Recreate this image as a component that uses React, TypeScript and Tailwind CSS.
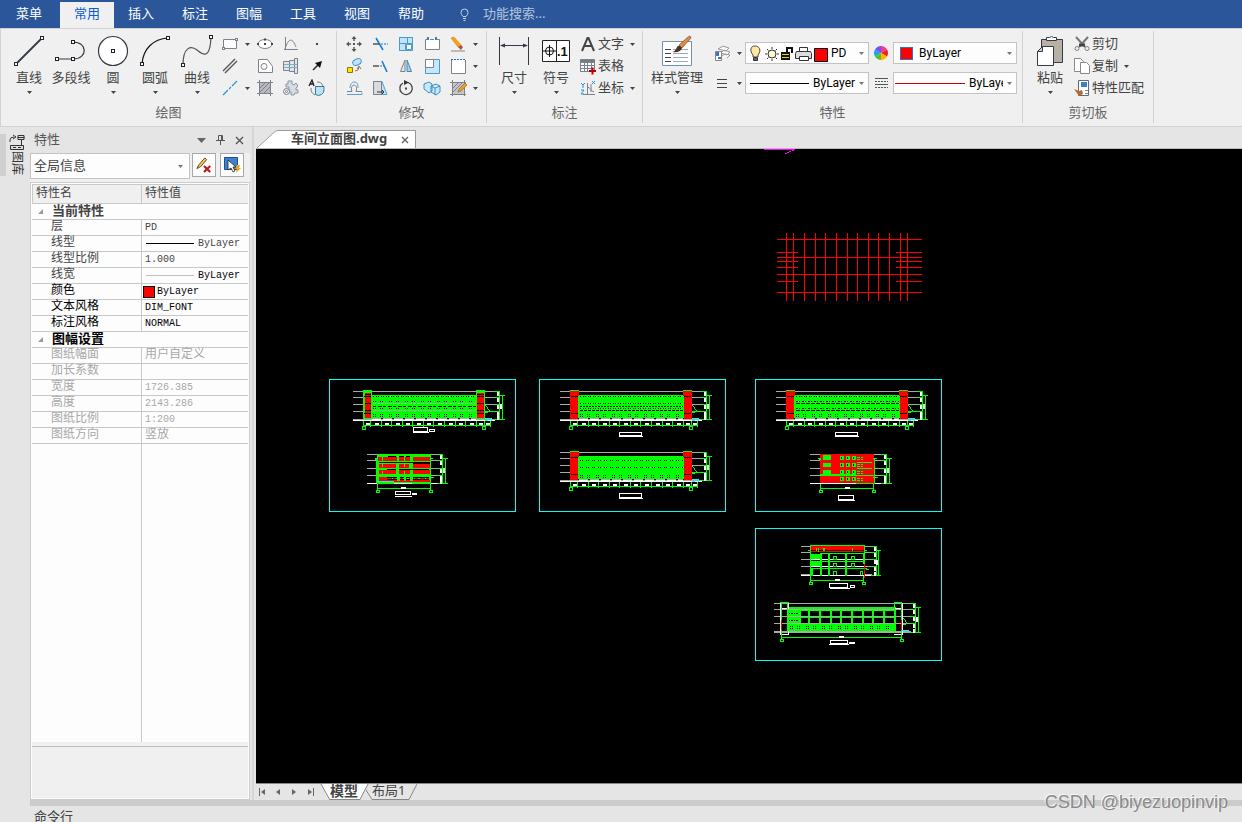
import React from 'react';

type Box = [number, number, number, number];

const GREEN = '#00ff00';
const RED = '#ff0000';
const WHITE = '#ffffff';
const GREY = '#a9a9a9';
const CYAN = '#00ffff';

/* ---------- shared bits ---------- */

function Caret({ className = 'text-[#444]' }: { className?: string }) {
  return (
    <svg width="5" height="3" viewBox="0 0 5 3" className={`shrink-0 ${className}`} aria-hidden="true">
      <path d="M0 0h5L2.5 3z" fill="currentColor" />
    </svg>
  );
}

function Icon({ children, size = 18 }: { children: React.ReactNode; size?: number }) {
  return (
    <svg
      width={size}
      height={size}
      viewBox="0 0 18 18"
      fill="none"
      stroke="#7d828a"
      strokeWidth="1"
      className="shrink-0"
      aria-hidden="true"
    >
      {children}
    </svg>
  );
}

function BigIcon({ children }: { children: React.ReactNode }) {
  return (
    <svg width="34" height="34" viewBox="0 0 34 34" fill="none" stroke="#333a44" className="shrink-0" aria-hidden="true">
      {children}
    </svg>
  );
}

const node = (x: number, y: number) => (
  <rect x={x - 1.5} y={y - 1.5} width="3" height="3" fill="#fff" stroke="#1d222b" />
);

/* ---------- ribbon icons ---------- */

const drawBig = [
  {
    label: '直线',
    menu: true,
    icon: (
      <BigIcon>
        <path d="M4 29 30 3" strokeWidth="1.8" />
        {node(4, 29)}
        {node(30, 3)}
      </BigIcon>
    ),
  },
  {
    label: '多段线',
    menu: false,
    icon: (
      <BigIcon>
        <path d="M3 24h16c15 0 15-17 0-17" strokeWidth="1.2" />
        {node(3, 24)}
        {node(19, 24)}
        {node(19, 7)}
      </BigIcon>
    ),
  },
  {
    label: '圆',
    menu: true,
    icon: (
      <BigIcon>
        <circle cx="17" cy="16" r="14.5" fill="#fff" strokeWidth="1.2" />
        {node(17, 16)}
      </BigIcon>
    ),
  },
  {
    label: '圆弧',
    menu: true,
    icon: (
      <BigIcon>
        <path d="M4 29C5 14 15 4 30 3" stroke="#111" strokeWidth="1.2" />
        {node(4, 29)}
        {node(30, 3)}
      </BigIcon>
    ),
  },
  {
    label: '曲线',
    menu: true,
    icon: (
      <BigIcon>
        <path d="M3 30C3 12 11 10 17 15s13 10 14-13" stroke="#555" strokeWidth="1.2" />
        {node(3, 30)}
        {node(31, 2)}
      </BigIcon>
    ),
  },
];

const drawSmall = [
  {
    name: '矩形',
    menu: true,
    icon: (
      <Icon>
        <path d="M2.500 4.500h13v9h-13z" fill="#fff" />
        <rect x="1.500" y="12.500" width="2" height="2" fill="#fff" />
        <rect x="14.500" y="3.500" width="2" height="2" fill="#fff" />
      </Icon>
    ),
  },
  {
    name: '椭圆',
    icon: (
      <Icon>
        <ellipse cx="9" cy="9" rx="7" ry="4.500" fill="#fff" />
        <path d="M8 9h2M8 4.500h2M1 9h2M15 9h2" stroke="#444" strokeWidth="2" />
      </Icon>
    ),
  },
  {
    name: '公式曲线',
    icon: (
      <Icon>
        <path d="M3.500 2v13M2 14.500h14M3 14C7 1 11 4 14 12" />
      </Icon>
    ),
  },
  {
    name: '点',
    icon: (
      <Icon>
        <rect x="8" y="8" width="2" height="2" fill="#444" stroke="none" />
      </Icon>
    ),
  },
  {
    name: '平行线',
    icon: (
      <Icon>
        <path d="M2 14 14 2M4 16 16 4" stroke="#555" strokeWidth="1.400" />
      </Icon>
    ),
  },
  {
    name: '多边形',
    icon: (
      <Icon>
        <path d="M2.500 2.500h9l5 7v6h-14z" fill="#fff" />
        <circle cx="8" cy="9.500" r="3" />
      </Icon>
    ),
  },
  {
    name: '轴',
    icon: (
      <Icon>
        <path d="M1.500 4.500h6v9h-6zM7.500 3.500h5v11h-5zM12.500 1.500h3v15h-3z" fill="#dce6f0" />
        <path d="M2 7.500h13M2 10.500h13" stroke="#8ab" />
      </Icon>
    ),
  },
  {
    name: '箭头',
    icon: (
      <Icon>
        <path d="m5 13 5-5" stroke="#222" strokeWidth="1.400" />
        <path d="m14 4-2 7-5-5z" fill="#111" stroke="none" />
      </Icon>
    ),
  },
  {
    name: '中心线',
    menu: true,
    icon: (
      <Icon>
        <path d="m2 16 5-5m1-1 2-2m1-1 5-5" stroke="#2a94d6" strokeWidth="1.200" />
      </Icon>
    ),
  },
  {
    name: '剖面线',
    icon: (
      <Icon>
        <path d="M3.500 3.500h11v11h-11z" fill="#b6bac0" />
        <path d="M1 3.500h16M1 14.500h16M3.500 1v16M14.500 1v16M4 9l5-5M4 13l9-9M8 14l6-6" />
      </Icon>
    ),
  },
  {
    name: '齿形',
    icon: (
      <Icon>
        <path
          d="M6 2h4v3l2 1 2-2 2 3-2 2v2h2v3h-3l-1 2H9v-3l-2 0v-5H4V5h2z"
          fill="#d4dce6"
          stroke="#8a95a2"
        />
        <circle cx="4.500" cy="12.500" r="3" fill="#f0f0f0" />
        <circle cx="4.500" cy="12.500" r="1" />
      </Icon>
    ),
  },
  {
    name: '局部放大',
    icon: (
      <Icon>
        <path d="M7.500 7.500H16v3a5.500 5.500 0 0 1-8.500 5z" fill="#b9e4fa" stroke="#478" />
        <path d="M9 3a6 6 0 0 1 6 4M3 9a7 7 0 0 0 4 7" />
        <path d="m1 7 3-6 2 6M2 5h4" stroke="#222" strokeWidth="1.300" />
      </Icon>
    ),
  },
];

const modifySmall = [
  {
    name: '平移',
    icon: (
      <Icon>
        <path d="M9 3v3M9 12v3M3 9h3M12 9h3" stroke="#555" strokeWidth="1.400" />
        <path d="m9 1 2.500 3h-5zM9 17l2.500-3h-5zM1 9l3 2.500v-5zM17 9l-3 2.500v-5z" fill="#555" stroke="none" />
        <path d="M8 9h2" stroke="#555" strokeWidth="2" />
      </Icon>
    ),
  },
  {
    name: '裁剪',
    icon: (
      <Icon>
        <path d="M2 9h7" stroke="#555" strokeWidth="1.500" />
        <path d="m5 3 7 12" stroke="#1677d0" strokeWidth="1.500" />
        <path d="M10 9h7" stroke="#1677d0" strokeDasharray="2 1" />
      </Icon>
    ),
  },
  {
    name: '阵列',
    icon: (
      <Icon>
        <path d="M2.500 2.500h13v13h-13z" fill="#fff" stroke="#4b9ac9" />
        <path d="M2.500 2.500h8v6h-8zM10.500 2.500h5v6h-5zM2.500 8.500h6v7h-6z" fill="#bfe5fa" stroke="#4b9ac9" />
        <path d="M9.500 9.500h5v5h-5z" fill="#fff" stroke="#4b9ac9" />
      </Icon>
    ),
  },
  {
    name: '打断',
    icon: (
      <Icon>
        <path d="M5 4.500H2.500v10h14v-10H13M7 4.500h4" fill="#fff" />
        <path d="M5 2v3M13 2v3" stroke="#2a84c8" strokeWidth="2" />
      </Icon>
    ),
  },
  {
    name: '删除',
    menu: true,
    icon: (
      <Icon>
        <path d="M2 16h14" stroke="#888" />
        <path d="m2 3 3-1 7 8-3 2z" fill="#f5a11d" stroke="#d08a18" strokeWidth=".7" />
        <path d="m9 12 3-2 2 2-2 3z" fill="#a84f45" stroke="none" />
      </Icon>
    ),
  },
  {
    name: '平移复制',
    icon: (
      <Icon>
        <ellipse cx="12" cy="5" rx="4.500" ry="3" transform="rotate(-25 12 5)" fill="#bfe5fa" stroke="#4b9ac9" />
        <path d="M2.500 10.500h5v5h-5z" fill="#ffe600" stroke="#887a00" />
        <path d="M10 14q4 0 4-4m-2 2 2-3 2 3" stroke="#a66" />
      </Icon>
    ),
  },
  {
    name: '延伸',
    icon: (
      <Icon>
        <path d="M2 9h6" stroke="#555" strokeWidth="1.500" />
        <path d="M9 9h4" stroke="#1677d0" strokeDasharray="2 1" />
        <path d="m11 4 5 11" stroke="#1677d0" strokeWidth="1.500" />
      </Icon>
    ),
  },
  {
    name: '镜像',
    icon: (
      <Icon>
        <path d="M8 3v11.500H3.500z" fill="#e4e6e8" />
        <path d="M10 3v11.500h4.500z" fill="#9ed5f2" stroke="#4b87a9" />
      </Icon>
    ),
  },
  {
    name: '缩放',
    icon: (
      <Icon>
        <path d="M2.500 2.500h14v14h-14z" fill="#c5e9fb" stroke="#4b9ac9" />
        <path d="M2.500 2.500h8v8h-8z" fill="#fff" />
      </Icon>
    ),
  },
  {
    name: '块',
    menu: true,
    icon: (
      <Icon>
        <path d="M2.500 3v13.500h14V3" fill="#fff" />
        <path d="M2 2.500h15" stroke="#1677d0" strokeDasharray="2 1" />
      </Icon>
    ),
  },
  {
    name: '等距线',
    icon: (
      <Icon>
        <path d="M2 12.500h5C4 4 14 4 11 12.500h6" stroke="#7a8088" />
        <path d="M2 15.500h15v-2M5 9C5 1 14 1 13 9" stroke="#5aa0cc" />
      </Icon>
    ),
  },
  {
    name: '拉伸',
    icon: (
      <Icon>
        <path d="M3 2.500h8l5 13H3z" fill="#bfe5fa" stroke="#5aa0cc" />
        <path d="M2.500 2.500h8v13h-8z" fill="#d9dbde" />
        <path d="M6 13h7m-2-2 2 2-2 2" stroke="#333" />
      </Icon>
    ),
  },
  {
    name: '旋转',
    icon: (
      <Icon>
        <path d="M6 4a6.200 6.200 0 1 0 5-.5" stroke="#444" strokeWidth="1.300" />
        <path d="M7 1v5l5-2.500z" fill="#333" stroke="none" />
        <path d="M8 9.500h2" stroke="#444" strokeWidth="2" />
      </Icon>
    ),
  },
  {
    name: '三维块',
    icon: (
      <Icon>
        <path d="M1 5l5-2 3 2v7l-3 2-5-4zM8 7l5-2 4 2v6l-4 3-5-3zM8 7l4 2 5-2M12 9v7" fill="#c5e9fb" stroke="#3d8fc0" />
      </Icon>
    ),
  },
  {
    name: '填充编辑',
    menu: true,
    icon: (
      <Icon>
        <path d="M3.500 3.500h12v12h-12z" fill="#c3c6ca" />
        <path d="M1 3.500h16M1 15.500h16M3.500 1v16M15.500 1v16M4 9l5-5M4 13l9-9" />
        <path d="m9 13 1-3 6-6 2 2-6 6z" fill="#f0a020" stroke="#8a5a10" strokeWidth=".6" />
      </Icon>
    ),
  },
];

/* ---------- ribbon ---------- */

function BigButton({
  label,
  icon,
  menu = true,
  className = 'w-[42px]',
}: {
  label: string;
  icon: React.ReactNode;
  menu?: boolean;
  className?: string;
}) {
  return (
    <button className={`flex shrink-0 flex-col items-center whitespace-nowrap pt-1 ${className}`}>
      {icon}
      <span className="leading-4">{label}</span>
      {menu && <Caret className="mt-1.5 text-[#444]" />}
    </button>
  );
}

function RowButton({ label, icon, menu = false }: { label: string; icon: React.ReactNode; menu?: boolean }) {
  return (
    <button className="flex h-[22px] items-center whitespace-nowrap">
      {icon}
      <span className="ml-px">{label}</span>
      {menu && <Caret className="ml-1.5 text-[#444]" />}
    </button>
  );
}

function ToolButton({ tool }: { tool: { name: string; icon: React.ReactNode; menu?: boolean } }) {
  return (
    <button aria-label={tool.name} className="flex h-[22px] items-center">
      {tool.icon}
      {tool.menu && <Caret className="ml-1.5 text-[#444]" />}
    </button>
  );
}

function Group({ title, className, children }: { title: string; className: string; children: React.ReactNode }) {
  return (
    <section className={`flex shrink-0 flex-col border-r border-[#d2d2d2] ${className}`}>
      <div className="flex h-[72px] items-start">{children}</div>
      <h2 className="text-center leading-[18px] text-[#666]">{title}</h2>
    </section>
  );
}

function Combo({
  label,
  options,
  lead,
  className,
  selectClass,
}: {
  label: string;
  options: string[];
  lead?: React.ReactNode;
  className: string;
  selectClass: string;
}) {
  return (
    <div className={`flex items-center border border-[#c3c3c3] bg-[#fdfdfd] ${className}`}>
      {lead}
      <select
        aria-label={label}
        className={`min-w-0 cursor-default appearance-none bg-transparent outline-none ${selectClass}`}
      >
        {options.map((o) => (
          <option key={o}>{o}</option>
        ))}
      </select>
      <Caret className="pointer-events-none ml-auto mr-1 text-[#777]" />
    </div>
  );
}

function LayerIcons() {
  return (
    <svg width="79" height="19" viewBox="0 0 79 19" fill="none" className="ml-1 shrink-0" aria-hidden="true">
      {/* bulb */}
      <path d="M3 11C-1 6 1 2 5 2s7 4 3 9v2H3z" fill="#ffe9a0" stroke="#444" />
      <path d="M3.500 13.500h4v3h-4z" fill="#666" stroke="#333" />
      {/* sun */}
      <circle cx="22" cy="10" r="4" fill="#fff8d0" stroke="#333" />
      <path d="M22 3v2M22 15v2M15 10h2M27 10h2M17 5l1.500 1.500M27 5l-1.500 1.500M17 15l1.500-1.500M27 15l-1.500-1.500" stroke="#333" />
      {/* lock */}
      <path d="M31 8h9v8h-9z" fill="#111" />
      <path d="M32 10.500h7M32 13.500h7" stroke="#e6d800" />
      <path d="M37 8V4h5v5" stroke="#111" strokeWidth="2" />
      {/* printer */}
      <path d="M49.500 8V3.500h8V8" fill="#fff" stroke="#333" />
      <path d="M46.500 7.500h14l1 2v5h-16v-5z" fill="#ddd" stroke="#333" />
      <path d="M49.500 12.500h9v4h-9z" fill="#fff" stroke="#333" />
      <path d="M64.500 4.500h13v13h-13z" fill="#f00" stroke="#000" />
    </svg>
  );
}

function Ribbon() {
  return (
    <div className="flex h-[99px] shrink-0 overflow-hidden border-y border-l border-[#d2d2d2] bg-[#f0f0f0] pb-[3px] pt-0.5 text-[#444]">
      <Group title="绘图" className="w-[336px]">
        <div className="flex pl-[7px]">
          {drawBig.map((b) => (
            <BigButton key={b.label} {...b} />
          ))}
        </div>
        <div className="ml-[3px] grid grid-cols-[35px_26px_26px_26px] pt-0.5">
          {drawSmall.map((t) => (
            <ToolButton key={t.name} tool={t} />
          ))}
        </div>
      </Group>

      <Group title="修改" className="w-[150px]">
        <div className="grid grid-cols-[26px_26px_26px_26px_34px] pl-2 pt-0.5">
          {modifySmall.map((t) => (
            <ToolButton key={t.name} tool={t} />
          ))}
        </div>
      </Group>

      <Group title="标注" className="w-[156px]">
        <div className="flex pl-1.5">
          <BigButton
            label="尺寸"
            icon={
              <BigIcon>
                <path d="M2.500 2v28M31.500 2v28M4 10.500h26" strokeWidth="1" />
                <path d="m3 10.500 5-2v4zM31 10.500l-5-2v4z" fill="#333a44" stroke="none" />
              </BigIcon>
            }
          />
          <BigButton
            label="符号"
            icon={
              <svg width="34" height="34" viewBox="0 0 34 34" className="shrink-0" aria-hidden="true">
                <path d="M3.500 5.500h27v21h-27zM17.500 5v22" fill="#fff" stroke="#222" />
                <circle cx="10.500" cy="16" r="4" fill="none" stroke="#111" />
                <path d="M4 16h13M10.500 10v12" stroke="#111" />
                <text x="18" y="21" fontSize="13" fontWeight="bold" fontFamily="Liberation Sans, sans-serif" fill="#111">
                  .1
                </text>
              </svg>
            }
          />
        </div>
        <div className="flex flex-col pl-0.5 pt-0.5">
          <RowButton
            label="文字"
            menu
            icon={
              <Icon>
                <path d="M3 16 8.500 3h1L15 16M5.500 11h7" stroke="#444" strokeWidth="2" />
              </Icon>
            }
          />
          <RowButton
            label="表格"
            icon={
              <Icon>
                <path d="M1.500 2.500h14v12h-14z" fill="#fff" />
                <path d="M1.500 2.500h14v3h-14z" fill="#777c84" />
                <path d="M1.500 8.500h14M1.500 11.500h14M5.500 5v9M8.500 5v9M12.500 5v9" />
                <path d="M10 14h7M13.500 10.500v7" stroke="#b00" strokeWidth="2" />
              </Icon>
            }
          />
          <RowButton
            label="坐标"
            menu
            icon={
              <Icon>
                <path d="M8.500 4v12M4 15.500h12M8 8c4 0 3 4 7 5M12 5v8" />
                <path d="m2 4 2 2v3M6 4 4 6M13 2l3 3m0-3-3 3M2 11h3l-3 4h3" stroke="#2a94d6" />
              </Icon>
            }
          />
        </div>
      </Group>

      <Group title="特性" className="w-[380px]">
        <BigButton
          label="样式管理"
          className="w-[68px]"
          icon={
            <svg width="34" height="34" viewBox="0 0 34 34" fill="none" className="shrink-0" aria-hidden="true">
              <path d="M2.500 6.500h29v24h-29z" fill="#fff" stroke="#7390ad" />
              <path d="M5 14.500h6M5 18.500h6M5 22.500h6M5 26.500h6" stroke="#445" />
              <path d="M13 14.500h15M13 18.500h15M13 22.500h15M13 26.500h15" stroke="#9aaabd" />
              <path d="m19 10 9-8q3-2 3 1l-9 10z" fill="#d98b4a" stroke="#8a4d1d" strokeWidth=".7" />
              <path d="M12 17q3 0 5-5 2-3 5 1-1 5-10 4z" fill="#4a3426" />
            </svg>
          }
        />
        <div className="grid grid-cols-[34px_124px_24px_124px] gap-y-2 pt-[11px] font-['Roboto',sans-serif] text-xs text-black">
          <button aria-label="图层" className="flex h-[22px] items-center gap-1.5 pl-0.5">
            <Icon>
              <path d="m5 5 5-3 6 2-3 3zM8 9l3-3 6 2-3 3zM9 12l3-2 5 1-3 3" fill="#f8f8f8" stroke="#999" />
              <path d="M2.500 7.500h6v9h-6z" fill="#fff" stroke="#888" />
              <path d="M3 8h3v4H3zM5 13h3v2H5z" fill="#3f74b5" stroke="none" />
            </Icon>
            <Caret />
          </button>
          <Combo label="图层列表" options={['PD']} lead={<LayerIcons />} className="h-[22px]" selectClass="ml-0.5 w-6" />
          <button aria-label="颜色" className="flex h-[22px] items-center justify-center">
            <svg width="14" height="14" viewBox="-7 -7 14 14" aria-hidden="true">
              <path d="M0 0V-7A7 7 0 0 1 6-3.500z" fill="#e83e9a" />
              <path d="M0 0 6-3.500A7 7 0 0 1 6 3.500z" fill="#f5201c" />
              <path d="M0 0 6 3.500A7 7 0 0 1 0 7z" fill="#ffb300" />
              <path d="M0 0V7A7 7 0 0 1-6 3.500z" fill="#52c41a" />
              <path d="M0 0-6 3.500A7 7 0 0 1-6-3.500z" fill="#24a0f0" />
              <path d="M0 0-6-3.500A7 7 0 0 1 0-7z" fill="#7a4df0" />
            </svg>
          </button>
          <Combo
            label="颜色列表"
            options={['ByLayer']}
            lead={<span className="ml-1.5 size-[13px] border border-[#1e78d0] bg-[#ff0000]" />}
            className="h-[22px]"
            selectClass="ml-1.5 w-16"
          />
          <button aria-label="线型" className="flex h-[22px] items-center gap-1.5 pl-0.5">
            <Icon>
              <path d="M4 5.500h10M4 9.500h10M4 13.500h10" stroke="#444" />
            </Icon>
            <Caret />
          </button>
          <Combo
            label="线型列表"
            options={['ByLayer']}
            lead={<span className="ml-1 h-px w-[59px] shrink-0 bg-black" />}
            className="h-[22px]"
            selectClass="ml-1 w-12"
          />
          <button aria-label="线宽" className="flex h-[22px] items-center justify-center">
            <svg width="13" height="12" viewBox="0 0 13 12" stroke="#555" aria-hidden="true">
              <path d="M0 1.500h13M0 7.500h13" />
              <path d="M0 4.500h13M0 10.500h13" strokeDasharray="2 1" />
            </svg>
          </button>
          <Combo
            label="线宽列表"
            options={['ByLayer']}
            lead={<span className="ml-px h-px w-[70px] shrink-0 bg-[#d00000]" />}
            className="h-[22px]"
            selectClass="ml-1 w-[34px]"
          />
        </div>
      </Group>

      <Group title="剪切板" className="w-[131px]">
        <div className="flex pl-1.5">
          <BigButton
            label="粘贴"
            icon={
              <BigIcon>
                <path d="M8.500 4.500h21v23h-21z" fill="#b9b0a4" />
                <path d="M13.500 5.500v-3h3q2-2 4 0h3v3z" fill="#fff" />
                <path d="M4.500 16.500l5-5h11v19h-16z" fill="#fff" />
                <path d="M4.500 16.500h5v-5z" fill="#c9ccd2" />
              </BigIcon>
            }
          />
        </div>
        <div className="flex flex-col pl-0.5 pt-0.5">
          <RowButton
            label="剪切"
            icon={
              <Icon>
                <path d="m3 2 9 10M15 2 6 12" stroke="#777" strokeWidth="2" />
                <path d="M6 10h6" stroke="#444" strokeWidth="3" />
                <circle cx="4" cy="13.500" r="2" />
                <circle cx="14" cy="13.500" r="2" />
              </Icon>
            }
          />
          <RowButton
            label="复制"
            menu
            icon={
              <Icon>
                <path d="M1.500 1.500h6l3 3v10h-9z" fill="#fff" stroke="#888" />
                <path d="M7.500 5.500h6l3 3v8h-9z" fill="#fff" stroke="#888" />
              </Icon>
            }
          />
          <RowButton
            label="特性匹配"
            icon={
              <Icon>
                <path d="M5.500 1.500h10v15h-10z" fill="#fff" stroke="#5a6b80" />
                <path d="M8 3h6v5H8z" fill="#3a7fc4" stroke="none" />
                <path d="M12 11.500h3M12 14.500h3" />
                <path d="M1 10l5 2 3-1 1 4-4 2z" fill="#b56a28" stroke="none" />
              </Icon>
            }
          />
        </div>
      </Group>
    </div>
  );
}

const menus = ['常用', '插入', '标注', '图幅', '工具', '视图', '帮助'];

function MenuBar() {
  return (
    <nav className="flex h-7 shrink-0 items-end bg-[#2b579a] text-white">
      <button className="h-[26px] w-[60px] pb-0.5 pr-0.5">菜单</button>
      {menus.map((m) => (
        <button
          key={m}
          className={
            m === '常用'
              ? 'h-[26px] w-[54px] bg-[#f0f0f0] pb-0.5 text-[#0a5ad0]'
              : 'h-[26px] w-[54px] pb-0.5'
          }
        >
          {m}
        </button>
      ))}
      <label className="ml-[22px] flex h-[26px] items-center gap-3.5 pb-0.5">
        <svg width="9" height="13" viewBox="0 0 9 13" fill="none" stroke="#c6d3e8" aria-hidden="true">
          <path d="M3 8.500Q1 6.500 1 4.500a3.500 3.500 0 0 1 7 0q0 2-2 4zM3 10.500h3M3.500 12.500h2" />
        </svg>
        <input
          aria-label="功能搜索"
          placeholder="功能搜索..."
          className="w-32 bg-transparent outline-none placeholder:text-[#b4c4de]"
        />
      </label>
    </nav>
  );
}

/* ---------- property panel ---------- */

interface PropRow {
  name: string;
  value?: React.ReactNode;
  group?: boolean;
  tone: string;
}

const soft = 'text-[#444]';
const dark = 'text-black';
const off = 'text-[#a8a8a8]';

const rows: PropRow[] = [
  { name: '当前特性', group: true, tone: soft },
  { name: '层', value: 'PD', tone: soft },
  {
    name: '线型',
    value: (
      <span className="flex items-center gap-1">
        <span className="ml-px h-px w-12 bg-black" />
        ByLayer
      </span>
    ),
    tone: soft,
  },
  { name: '线型比例', value: '1.000', tone: soft },
  {
    name: '线宽',
    value: (
      <span className="flex items-center gap-1 text-black">
        <span className="ml-px h-px w-12 bg-[#c0c0c0]" />
        ByLayer
      </span>
    ),
    tone: soft,
  },
  {
    name: '颜色',
    value: (
      <span className="-ml-0.5 flex items-center gap-0.5">
        <span className="size-3 border border-black bg-[#ff0000]" />
        ByLayer
      </span>
    ),
    tone: dark,
  },
  { name: '文本风格', value: 'DIM_FONT', tone: dark },
  { name: '标注风格', value: 'NORMAL', tone: dark },
  { name: '图幅设置', group: true, tone: dark },
  { name: '图纸幅面', value: <span className="text-xs leading-[15px]">用户自定义</span>, tone: off },
  { name: '加长系数', tone: off },
  { name: '宽度', value: '1726.385', tone: off },
  { name: '高度', value: '2143.286', tone: off },
  { name: '图纸比例', value: '1:200', tone: off },
  { name: '图纸方向', value: <span className="text-xs leading-[15px]">竖放</span>, tone: off },
];

function PropertyPanel() {
  return (
    <aside className="flex w-[220px] shrink-0 flex-col">
      <header className="flex h-[26px] items-center pl-1 pr-1.5 text-[#555]">
        <h2>特性</h2>
        <button aria-label="菜单" className="ml-auto">
          <svg width="9" height="5" viewBox="0 0 9 5" aria-hidden="true">
            <path d="M0 0h9L4.500 5z" fill="#666" />
          </svg>
        </button>
        <button aria-label="固定" className="ml-2.5">
          <svg width="9" height="10" viewBox="0 0 9 10" fill="none" stroke="#555" aria-hidden="true">
            <path d="M2.500 5.500v-5h4v5M5.500 0v5M0 5.500h9M4.500 6v4" />
          </svg>
        </button>
        <button aria-label="关闭" className="ml-2.5">
          <svg width="9" height="9" viewBox="0 0 9 9" stroke="#555" strokeWidth="1.400" aria-hidden="true">
            <path d="m1 1 7 7M8 1 1 8" />
          </svg>
        </button>
      </header>

      <div className="flex h-[29px] items-start bg-[#f0f0f0]">
        <Combo
          label="选择集"
          options={['全局信息']}
          className="h-[26px] w-40 pr-0.5 text-[#444]"
          selectClass="ml-[3px] w-32"
        />
        <button aria-label="清除" className="ml-0.5 flex size-6 items-center justify-center border border-[#a9a9a9] bg-[#fdfdfd]">
          <Icon size={16}>
            <path d="m1 13 2-4 7-8 2 2-7 8z" fill="#f8c552" stroke="#5a3a10" />
            <path d="m9 10 7 7M16 10l-7 7" stroke="#c01818" strokeWidth="2.400" />
          </Icon>
        </button>
        <button aria-label="选择" className="ml-1 flex size-6 items-center justify-center border border-[#a9a9a9] bg-[#fdfdfd]">
          <Icon size={18}>
            <path d="M1.500 1.500h13v12h-13z" fill="#3b82cf" stroke="#1b4f90" />
            <path d="M5 4v10l3-2 2 4 2-1-2-4h3z" fill="#fff" stroke="#222" strokeWidth=".8" />
            <path d="m14 9-2 4h2l-1 4 5-5h-2l1-3z" fill="#f5a11d" stroke="none" />
          </Icon>
        </button>
      </div>

      <div className="flex min-h-0 flex-1 flex-col border border-[#ccc] bg-[#fdfdfd] p-px font-['Liberation_Mono','Noto_Sans_CJK_SC',monospace]">
        <table className="w-full table-fixed border-separate border-spacing-0 text-left">
          <thead>
            <tr className="bg-[#f0f0f0] text-xs leading-[18px] text-[#444]">
              <th className="h-5 w-[110px] border border-[#c8c8c8] p-0 pl-[3px] font-normal">特性名</th>
              <th className="h-5 border-y border-[#c8c8c8] p-0 pl-[3px] font-normal">特性值</th>
            </tr>
          </thead>
          <tbody>
            {rows.map((r) =>
              r.group ? (
                <tr key={r.name} className={r.tone}>
                  <th colSpan={2} className="h-4 border-b border-[#c8c8c8] p-0 pl-1.5 text-[13px] leading-[15px]">
                    <span className="flex items-center gap-[9px]">
                      <svg width="5" height="5" viewBox="0 0 5 5" aria-hidden="true">
                        <path d="M5 0v5H0z" fill="#999" />
                      </svg>
                      {r.name}
                    </span>
                  </th>
                </tr>
              ) : (
                <tr key={r.name} className={r.tone}>
                  <th className="h-4 border-b border-r border-[#c8c8c8] p-0 pl-[19px] text-xs font-normal leading-[15px]">
                    {r.name}
                  </th>
                  <td className="h-4 whitespace-nowrap border-b border-[#c8c8c8] p-0 pl-[3px] text-[10px] leading-[15px]">
                    {r.value}
                  </td>
                </tr>
              )
            )}
          </tbody>
        </table>
        <div className="w-[110px] flex-1 border-r border-[#c8c8c8]" />
        <div className="h-14 border-t-4 border-[#f0f0f0]">
          <div className="h-full border-t border-[#c0c0c0] bg-[#f0f0f0]" />
        </div>
      </div>
    </aside>
  );
}

/* ---------- drawing ---------- */

function Fill({ c, r }: { c: string; r: Box[] }) {
  return <path fill={c} d={r.map(([x, y, w, h]) => `M${x} ${y}h${w}v${h}h${-w}z`).join('')} />;
}

function Dots({ x, y, w, dash, c = '#000' }: { x: number; y: number; w: number; dash: string; c?: string }) {
  return <path d={`M${x} ${y + 0.5}h${w}`} stroke={c} strokeWidth="1" strokeDasharray={dash} fill="none" />;
}

function Outline({ c, r }: { c: string; r: Box[] }) {
  return (
    <path
      fill="none"
      stroke={c}
      strokeWidth="1"
      d={r.map(([x, y, w, h]) => `M${x + 0.5} ${y + 0.5}h${w - 1}v${h - 1}h${-(w - 1)}z`).join('')}
    />
  );
}

// vertical dimension chain: levels are the storey lines, the outer line starts one level down
function Dims({ x, levels, gap = 3 }: { x: number; levels: number[]; gap?: number }) {
  const top = levels[0];
  const bottom = levels[levels.length - 1];
  return (
    <g>
      <Fill c={GREEN} r={levels.map((y): Box => [x - 3, y, 6, 1])} />
      <Fill
        c={GREEN}
        r={[
          [x + 2, top, 1, bottom - top],
          [x + 2 + gap, levels[1] - 2, 1, bottom - levels[1] + 3],
          [x + gap, levels[1] - 2, 5, 1],
          [x + gap, bottom, 5, 1],
        ]}
      />
      <Fill c={WHITE} r={levels.slice(0, -1).map((y): Box => [x, y + 1, 2, 4])} />
      <Fill
        c={WHITE}
        r={[
          [x, bottom - 3, 2, 4],
          [x + gap, Math.round((top + bottom) / 2) - 1, 2, 5],
        ]}
      />
    </g>
  );
}

const axes = [0, 7, 18, 28, 39, 49, 60, 70, 81, 92, 102, 113, 121, 127];

type Pattern = { y: number; dash: string; c?: string };

const pair = '1 1 1 4 1 1 1 6';
const dense = '1 2 1 1';

function LongElevation({
  x,
  y,
  windows,
  framed = false,
  label,
}: {
  x: number;
  y: number;
  windows: Pattern[];
  framed?: boolean;
  label: Box;
}) {
  return (
    <g transform={`translate(${x} ${y})`}>
      <Fill
        c={GREY}
        r={[
          [-10, 1, 142, 1],
          [-10, 7, 10, 1],
          [-10, 14, 10, 1],
          [-10, 21, 10, 1],
          [-10, 29, 142, 1],
          [122, 7, 10, 1],
          [122, 14, 10, 1],
          [122, 21, 10, 1],
        ]}
      />
      <Fill c={WHITE} r={[[-10, 30, 142, 1]]} />
      <Fill c={GREEN} r={[[8, 5, 106, 23]]} />
      <Dots x={9} y={28} w={104} dash="9 2" c={GREY} />
      <Dots x={9} y={29} w={104} dash="9 2" c={WHITE} />
      {framed ? (
        <>
          <Fill
            c={GREEN}
            r={[
              [0, 0, 9, 29],
              [113, 0, 9, 29],
            ]}
          />
          <Fill
            c={RED}
            r={[
              [2, 3, 6, 25],
              [114, 3, 7, 25],
            ]}
          />
        </>
      ) : (
        <>
          <Fill
            c={RED}
            r={[
              [0, 0, 9, 6],
              [0, 6, 8, 23],
              [113, 0, 9, 6],
              [114, 6, 8, 23],
            ]}
          />
          <Fill
            c={GREEN}
            r={[
              [0, 0, 9, 1],
              [113, 0, 9, 1],
            ]}
          />
        </>
      )}
      <Fill
        c="#000"
        r={[
          [1, 6, 7, 1],
          [1, 23, 7, 1],
          [114, 6, 7, 1],
          [114, 23, 7, 1],
        ]}
      />
      {framed && (
        <Fill
          c="#000"
          r={[
            [2, 4, 6, 1],
            [2, 13, 6, 1],
            [2, 20, 6, 1],
            [114, 4, 7, 1],
            [114, 13, 7, 1],
            [114, 20, 7, 1],
          ]}
        />
      )}
      {windows.map((p, i) => (
        <Dots key={i} x={10} y={p.y} w={103} dash={p.dash} c={p.c} />
      ))}
      {/* axis chain under the building */}
      <Fill c={GREEN} r={axes.map((a): Box => [a, 31, 1, 6])} />
      <Fill c={GREEN} r={[[0, 35, 128, 1]]} />
      <Fill c={WHITE} r={axes.slice(0, -1).map((a, i): Box => [Math.round((a + axes[i + 1]) / 2) - 1, 33, 4, 2])} />
      <Outline
        c={GREEN}
        r={[
          [-1, 36, 4, 4],
          [119, 36, 4, 4],
        ]}
      />
      {/* stair and ramp */}
      <Fill
        c={GREEN}
        r={[
          [122, 15, 1, 1],
          [123, 16, 1, 1],
          [124, 17, 1, 2],
          [125, 19, 1, 1],
          [126, 20, 1, 1],
          [122, 21, 5, 1],
          [127, 21, 6, 1],
          [122, 22, 3, 1],
        ]}
      />
      <Fill
        c={CYAN}
        r={[
          [122, 28, 7, 1],
          [122, 30, 3, 1],
          [128, 28, 1, 3],
        ]}
      />
      <Dims x={134} levels={[1, 7, 14, 21, 29]} />
      <Outline c={WHITE} r={[label]} />
      <Fill c={WHITE} r={[[label[0], label[1] + label[3], label[2] + 1, 1]]} />
    </g>
  );
}

// feet below a short elevation: posts, dimension line, axis bubbles
function Feet({ x1, x2, y, mid }: { x1: number; x2: number; y: number; mid: number }) {
  return (
    <g>
      <Fill
        c={GREEN}
        r={[
          [x1, y, 1, 7],
          [x2, y, 1, 7],
          [x1, y + 4, x2 - x1, 1],
        ]}
      />
      <Outline
        c={GREEN}
        r={[
          [x1 - 1, y + 6, 4, 3],
          [x2 - 1, y + 6, 4, 3],
        ]}
      />
      <Fill c={WHITE} r={[[mid, y + 3, 5, 2]]} />
    </g>
  );
}

function SideLevels({ x1, x2, x3, x4, levels, base }: { x1: number; x2: number; x3: number; x4: number; levels: number[]; base: number }) {
  return (
    <g>
      <Fill c={GREY} r={levels.flatMap((y): Box[] => [[x1, y, x2 - x1, 1], [x3, y, x4 - x3, 1]])} />
      <Fill c={WHITE} r={[[x1, base, x4 - x1, 1]]} />
    </g>
  );
}

function SideFramed() {
  return (
    <g transform="translate(325 375)">
      <SideLevels x1={42} x2={52} x3={106} x4={113} levels={[79, 85, 93, 100]} base={108} />
      <Fill c={GREEN} r={[[52, 79, 54, 30], [51, 85, 1, 23], [50, 83, 2, 2], [106, 83, 2, 1], [106, 102, 3, 1]]} />
      <Fill
        c={RED}
        r={[
          [53, 82, 52, 4],
          [54, 89, 51, 4],
          [54, 95, 51, 4],
          [54, 102, 8, 5],
          [62, 105, 43, 2],
        ]}
      />
      <Fill
        c="#000"
        r={[
          [63, 81, 8, 1],
          [74, 81, 5, 1],
          [81, 81, 4, 1],
          [54, 87, 51, 1],
          [88, 88, 17, 1],
          [62, 94, 42, 1],
          [62, 102, 42, 1],
          [62, 104, 42, 1],
        ]}
      />
      <Dots x={62} y={103} w={43} dash="5 1 3 2" c={RED} />
      <Fill
        c={GREEN}
        r={[
          [57, 81, 1, 5],
          [72, 81, 2, 5],
          [79, 82, 1, 4],
          [85, 81, 3, 5],
          [57, 89, 1, 3],
          [71, 88, 3, 12],
          [79, 88, 1, 4],
          [84, 88, 4, 5],
          [57, 96, 1, 3],
          [79, 96, 1, 3],
          [85, 95, 3, 5],
          [72, 102, 3, 4],
          [79, 102, 2, 4],
          [85, 102, 3, 4],
        ]}
      />
      <Fill c={CYAN} r={[[53, 106, 16, 1]]} />
      <Fill c={WHITE} r={[[69, 108, 18, 1]]} />
      <Feet x1={52} x2={105} y={109} mid={76} />
      <Dims x={115} levels={[79, 85, 93, 100, 108]} />
      <Outline c={WHITE} r={[[70, 116, 16, 4]]} />
      <Fill c={WHITE} r={[[87, 118, 5, 2], [70, 121, 17, 1]]} />
    </g>
  );
}

function SideSolid() {
  const win = [81, 88, 95, 102];
  return (
    <g transform="translate(750 375)">
      <SideLevels x1={60} x2={70} x3={124} x4={131} levels={[79, 85, 93, 100]} base={108} />
      <Fill c={RED} r={[[70, 79, 54, 29]]} />
      <Fill
        c={GREEN}
        r={[
          [73, 80, 8, 5],
          [73, 88, 8, 4],
          [73, 95, 8, 5],
          [70, 99, 36, 2],
          [106, 100, 18, 1],
          [107, 87, 15, 1],
          [107, 93, 15, 1],
          [68, 83, 3, 1],
          [69, 84, 2, 1],
          [124, 83, 1, 26],
          [123, 83, 4, 1],
          [123, 102, 5, 1],
          [106, 108, 18, 1],
        ]}
      />
      {win.map((y) => (
        <g key={y}>
          <Fill c={GREEN} r={[[90, y, 4, 4], [96, y, 4, 4], [102, y, 4, 4]]} />
          <Fill c="#000" r={[[91, y + 1, 1, 2], [97, y + 1, 1, 2], [103, y + 1, 1, 2]]} />
          <Dots x={107} y={y + 1} w={6} dash="3 1 2 1" c={GREEN} />
          <Dots x={107} y={y + 3} w={6} dash="3 1 2 1" c={GREEN} />
        </g>
      ))}
      <Feet x1={70} x2={123} y={109} mid={95} />
      <Dims x={134} levels={[79, 85, 93, 100, 108]} />
      <Outline c={WHITE} r={[[88, 120, 16, 5]]} />
      <Fill c={WHITE} r={[[88, 125, 17, 1]]} />
    </g>
  );
}

function ShortSection() {
  return (
    <g transform="translate(750 375)">
      <SideLevels x1={51} x2={61} x3={114} x4={122} levels={[171, 177, 184, 191, 199]} base={200} />
      <Fill c={GREEN} r={[[60, 170, 55, 1], [60, 170, 1, 31], [114, 170, 1, 19], [58, 175, 3, 1], [114, 175, 3, 1]]} />
      <Fill c={RED} r={[[61, 171, 53, 4], [61, 176, 53, 1], [114, 189, 1, 14]]} />
      <Fill c={GREEN} r={[[66, 173, 1, 3], [68, 173, 1, 4], [73, 173, 2, 3], [102, 173, 1, 3]]} />
      <Fill c={WHITE} r={[[61, 184, 53, 1], [61, 191, 53, 1]]} />
      <Fill
        c={GREEN}
        r={[
          [70, 178, 44, 1],
          [61, 179, 10, 5],
          [61, 186, 53, 1],
          [61, 187, 10, 4],
          [61, 193, 53, 1],
          [61, 194, 2, 7],
          [70, 178, 2, 23],
          [78, 178, 2, 23],
          [95, 178, 2, 23],
          [113, 178, 2, 11],
          [115, 193, 2, 1],
          [116, 194, 3, 1],
        ]}
      />
      <Fill c={GREEN} r={[[83, 181, 4, 4], [101, 181, 4, 4], [83, 188, 4, 4], [101, 188, 4, 4], [83, 196, 4, 4], [110, 196, 3, 4]]} />
      <Fill c="#000" r={[[84, 182, 2, 2], [102, 182, 2, 2], [84, 189, 2, 2], [102, 189, 2, 2], [84, 197, 2, 3], [111, 197, 1, 3]]} />
      <Feet x1={60} x2={113} y={201} mid={85} />
      <Dims x={124} levels={[171, 177, 184, 191, 200]} gap={2} />
      <Outline c={WHITE} r={[[79, 208, 19, 5], [100, 210, 5, 3]]} />
      <Fill c={WHITE} r={[[80, 213, 20, 1]]} />
    </g>
  );
}

function LongSection() {
  const cols = [49, 58, 69, 80, 90, 101, 112, 122, 133, 144];
  return (
    <g transform="translate(750 375)">
      <Fill c={GREEN} r={[[38, 232, 107, 4], [38, 232, 11, 24], [38, 249, 107, 7], [38, 242, 107, 1]]} />
      <Fill c={GREEN} r={cols.map((x): Box => [x, 232, 2, 24])} />
      <Dots x={39} y={238} w={9} dash="1 1 2 1" />
      <Dots x={39} y={245} w={9} dash="1 1 2 1" />
      <Dots x={40} y={251} w={103} dash={pair} />
      <Dots x={40} y={253} w={103} dash={pair} />
      <Fill
        c={GREY}
        r={[
          [24, 228, 137, 1],
          [24, 234, 137, 1],
          [24, 241, 137, 1],
          [24, 248, 137, 1],
          [24, 256, 137, 2],
        ]}
      />
      <Fill
        c={WHITE}
        r={[
          [30, 228, 1, 31],
          [38, 228, 1, 6],
          [38, 256, 1, 3],
          [30, 259, 9, 1],
          [32, 233, 6, 1],
          [144, 233, 8, 1],
          [152, 228, 1, 31],
          [144, 259, 9, 1],
        ]}
      />
      <Fill
        c={GREEN}
        r={[
          [30, 227, 9, 1],
          [144, 227, 8, 1],
          [31, 228, 1, 31],
          [37, 228, 1, 30],
          [144, 228, 1, 30],
          [151, 228, 1, 31],
          [153, 243, 1, 1],
          [154, 244, 1, 1],
          [155, 245, 1, 2],
          [156, 247, 1, 2],
          [153, 249, 3, 1],
        ]}
      />
      <Fill c={RED} r={[[31, 245, 1, 10], [151, 245, 1, 10]]} />
      <Fill c={CYAN} r={[[152, 255, 7, 1]]} />
      <Feet x1={31} x2={151} y={258} mid={89} />
      <Dims x={163} levels={[228, 234, 241, 248, 257]} />
      <Outline c={WHITE} r={[[80, 265, 18, 4]]} />
      <Fill c={WHITE} r={[[99, 267, 6, 2], [79, 269, 20, 1]]} />
    </g>
  );
}

const gridX = [786, 793, 804, 815, 825, 836, 847, 857, 868, 878, 889, 900, 907];
const gridY = [239, 257, 274, 292];
const gridShort = [252, 261, 267, 281];

function Drawing() {
  return (
    <svg
      viewBox="256 149 986 634"
      preserveAspectRatio="xMinYMin meet"
      shapeRendering="crispEdges"
      className="min-h-0 w-full flex-1 bg-black"
      role="img"
      aria-label="车间立面图"
    >
      <Fill c="#ff00ff" r={[[764, 149, 31, 1], [792, 150, 2, 1], [789, 151, 2, 1], [787, 152, 2, 1], [785, 153, 2, 1]]} />

      {/* axis grid */}
      <Fill c={RED} r={gridX.map((x): Box => [x, 233, 1, 68])} />
      <Fill c={RED} r={gridY.map((y): Box => [777, y, 145, 1])} />
      <Fill c={RED} r={gridShort.flatMap((y): Box[] => [[777, y, 21, 1], [896, y, 26, 1]])} />

      {/* sheets */}
      <Outline c={CYAN} r={[[329, 379, 187, 133], [539, 379, 187, 133], [755, 379, 187, 133], [755, 528, 187, 133]]} />

      <LongElevation
        x={363}
        y={390}
        framed
        label={[50, 37, 15, 5]}
        windows={[
          { y: 6, dash: dense },
          { y: 11, dash: pair },
          { y: 13, dash: '3 1', c: GREY },
          { y: 16, dash: '3 2 4 1' },
          { y: 18, dash: pair },
          { y: 20, dash: '4 1', c: GREY },
          { y: 24, dash: pair },
          { y: 26, dash: pair },
        ]}
      />
      <Outline c={WHITE} r={[[429, 429, 6, 3]]} />
      <SideFramed />

      <LongElevation
        x={570}
        y={390}
        label={[49, 42, 23, 4]}
        windows={[
          { y: 6, dash: dense },
          { y: 13, dash: dense },
          { y: 16, dash: '2 1' },
          { y: 18, dash: dense },
          { y: 20, dash: '3 1' },
          { y: 24, dash: pair },
          { y: 26, dash: pair },
        ]}
      />
      <LongElevation
        x={570}
        y={451}
        label={[49, 42, 23, 5]}
        windows={[
          { y: 9, dash: '1 1 1 3' },
          { y: 16, dash: '1 1 1 3' },
          { y: 24, dash: pair },
          { y: 26, dash: pair },
        ]}
      />

      <LongElevation
        x={786}
        y={390}
        label={[49, 42, 23, 4]}
        windows={[
          { y: 6, dash: dense },
          { y: 11, dash: '2 1 1 2' },
          { y: 13, dash: '4 1' },
          { y: 18, dash: '2 1 1 2' },
          { y: 20, dash: '4 1' },
          { y: 24, dash: pair },
          { y: 26, dash: pair },
        ]}
      />
      <SideSolid />

      <ShortSection />
      <LongSection />
    </svg>
  );
}

function DocumentTabs() {
  return (
    <div className="flex h-[22px] shrink-0 items-end border-b border-[#bbb]">
      <div className="flex h-[18px]">
        <svg width="23" height="18" viewBox="0 0 23 18" aria-hidden="true">
          <path d="M1 18 19 1q1-1 4-1v18z" fill="#fff" />
          <path d="M1 18 19 1.500q1-1 4-1" fill="none" stroke="#999" />
        </svg>
        <div className="flex items-start border-r border-t border-[#999] bg-white pl-3 pr-1.5">
          <button className="whitespace-nowrap font-bold leading-[15px] text-[#444]">车间立面图.dwg</button>
          <button aria-label="关闭" className="ml-3.5 pt-[5px]">
            <svg width="8" height="8" viewBox="0 0 8 8" stroke="#666" strokeWidth="1.400" aria-hidden="true">
              <path d="m1 1 6 6M7 1 1 7" />
            </svg>
          </button>
        </div>
      </div>
    </div>
  );
}

const pagers = [
  { name: '首页', d: 'M1.500 0v8', tri: 'M7 1v6L3 4z' },
  { name: '上一页', d: '', tri: 'M6 1v6L2 4z' },
  { name: '下一页', d: '', tri: 'M2 1v6l4-3z' },
  { name: '末页', d: 'M7.500 0v8', tri: 'M2 1v6l4-3z' },
];

function LayoutTabs() {
  return (
    <div className="flex h-[17px] shrink-0 items-start border-t border-[#888] text-[#444]">
      <div className="flex gap-2 pl-0.5 pt-1">
        {pagers.map((p) => (
          <button key={p.name} aria-label={p.name}>
            <svg width="8" height="8" viewBox="0 0 8 8" aria-hidden="true">
              <path d={p.d} stroke="#666" />
              <path d={p.tri} fill="#666" />
            </svg>
          </button>
        ))}
      </div>
      <svg width="10" height="16" viewBox="0 0 10 16" className="ml-1.5 shrink-0" aria-hidden="true">
        <path d="M1 0h9v16z" fill="#fff" />
        <path d="m1 0 9 16" stroke="#888" />
      </svg>
      <button className="h-4 border-b border-[#888] bg-white pb-0.5 text-sm font-bold leading-[13px]">模型</button>
      <svg width="14" height="16" viewBox="0 0 14 16" className="shrink-0" aria-hidden="true">
        <path d="M0 0h10L2 15.500H0z" fill="#fff" />
        <path d="M0 15.500h2L10 0M8 6l6 9.500" fill="none" stroke="#888" />
      </svg>
      <button className="h-4 border-b border-[#888] pb-0.5 leading-[13px]">布局1</button>
      <svg width="12" height="16" viewBox="0 0 12 16" className="shrink-0" aria-hidden="true">
        <path d="M0 15.500h4L12 0" fill="none" stroke="#888" />
      </svg>
    </div>
  );
}

function SideDock() {
  return (
    <div className="flex w-[30px] shrink-0 items-start pt-[7px]">
      <div className="h-[42px] w-1.5 bg-[#d0d0d0]" />
      <button className="flex flex-col items-center pl-[3px] text-xs text-[#333]">
        <svg width="16" height="17" viewBox="0 0 16 17" fill="none" stroke="#333" aria-hidden="true">
          <path d="M1 8V6q0-3 4-3M4 1l3 2-3 2M8.500 3.500h7M9 1.500h6v4H9zM12.500 5v6" />
          <path d="M1.500 11.500h13v4h-13zM4 13.500h3M9 13.500h3" fill="#ddd" />
        </svg>
        <span className="leading-[14px] [text-orientation:sideways] [writing-mode:vertical-rl]">图库</span>
      </button>
    </div>
  );
}

export default function App() {
  return (
    <div className="relative flex h-screen flex-col overflow-hidden bg-[#e5e5e5] font-['Noto_Sans','Noto_Sans_CJK_SC',sans-serif] text-[13px]">
      <MenuBar />
      <Ribbon />

      <div className="flex min-h-0 flex-1">
        <SideDock />
        <div className="flex min-w-0 flex-1 flex-col">
          <div className="flex min-h-0 flex-1">
            <PropertyPanel />
            <div className="mx-0.5 w-0.5 bg-[#d6d6d6]" />
            <main className="flex min-w-0 flex-1 flex-col">
              <DocumentTabs />
              <Drawing />
              <LayoutTabs />
            </main>
          </div>
          <div className="h-1.5 shrink-0 bg-[#cbcbcb]" />
          <footer className="h-4 shrink-0 overflow-hidden pl-1 leading-5 text-[#444]">命令行</footer>
        </div>
      </div>

      <div className="pointer-events-none absolute bottom-2 right-3.5 font-['Liberation_Sans',sans-serif] text-[18px] leading-6 text-[#8a8a8a] [text-shadow:-1px_-1px_0_#f8f8f8]">
        CSDN @biyezuopinvip
      </div>
    </div>
  );
}
